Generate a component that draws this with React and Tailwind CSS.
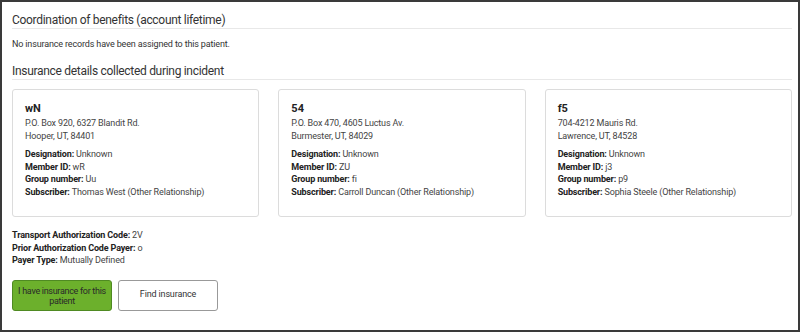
import React from "react";

const cards = [
  { title: "wN", addr1: "P.O. Box 920, 6327 Blandit Rd.", addr2: "Hooper, UT, 84401", member: "wR", group: "Uu", sub: "Thomas West (Other Relationship)" },
  { title: "54", addr1: "P.O. Box 470, 4605 Luctus Av.", addr2: "Burmester, UT, 84029", member: "ZU", group: "fi", sub: "Carroll Duncan (Other Relationship)" },
  { title: "f5", addr1: "704-4212 Mauris Rd.", addr2: "Lawrence, UT, 84528", member: "j3", group: "p9", sub: "Sophia Steele (Other Relationship)" },
];

function Field({ label, value }) {
  return (
    <div className="leading-[12.7px] whitespace-nowrap">
      <span className="font-bold text-[#222]">{label}:</span> <span>{value}</span>
    </div>
  );
}

export default function App() {
  return (
    <div
      className="w-[800px] h-[332px] border-2 border-[#3a3a3a] bg-white text-[9px] tracking-[-0.15px] text-[#444] overflow-hidden"
      style={{ fontFamily: "Roboto, 'Liberation Sans', sans-serif" }}
    >
      <div className="pl-[10px] pr-[6px] pt-[10px]">
        <div className="text-[12px] leading-[16px] tracking-[-0.3px] text-[#333] border-b border-[#e8e8e8]">
          Coordination of benefits (account lifetime)
        </div>
        <div className="mt-[8px] leading-[14px] text-[#333]">No insurance records have been assigned to this patient.</div>
        <div className="mt-[12px] text-[12px] leading-[16px] tracking-[-0.3px] text-[#333] border-b border-[#e8e8e8]">
          Insurance details collected during incident
        </div>
        <div className="mt-[9px] flex gap-[19px]">
          {cards.map((c) => (
            <div key={c.title} className="flex-1 h-[128px] border border-[#dcdcdc] rounded-[3px] pl-[12px] pt-[11px]">
              <div className="text-[11px] leading-[16px] tracking-normal font-bold text-[#222]">{c.title}</div>
              <div className="leading-[13px]">{c.addr1}</div>
              <div className="leading-[13px]">{c.addr2}</div>
              <div className="mt-[5px]">
                <Field label="Designation" value="Unknown" />
                <Field label="Member ID" value={c.member} />
                <Field label="Group number" value={c.group} />
                <Field label="Subscriber" value={c.sub} />
              </div>
            </div>
          ))}
        </div>
        <div className="mt-[12px]">
          <Field label="Transport Authorization Code" value="2V" />
          <Field label="Prior Authorization Code Payer" value="o" />
          <Field label="Payer Type" value="Mutually Defined" />
        </div>
        <div className="mt-[13px] flex gap-[6px]">
          <button className="w-[100px] h-[31px] rounded-[3px] border border-[#4f8a22] bg-[#6cb02c] text-[9px] leading-[10px] tracking-[-0.3px] text-[#2a2a2a] px-0">
            I have insurance for this patient
          </button>
          <button className="w-[100px] h-[31px] rounded-[3px] border border-[#999] bg-white text-[9px] leading-[10px] text-[#333] pb-[3px]">
            Find insurance
          </button>
        </div>
      </div>
    </div>
  );
}
